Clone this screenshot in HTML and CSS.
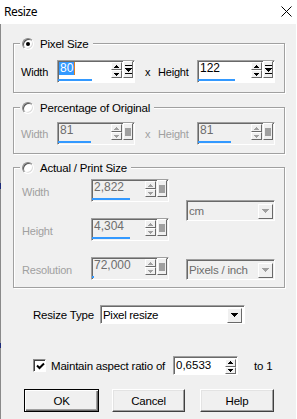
FILE: index.html
```html
<!DOCTYPE html>
<html>
<head>
<meta charset="utf-8">
<link rel="stylesheet" href="styles.css">
</head>
<body>
<div class="titlebar">
  <span class="title">Resize</span>
  <svg class="close" width="11" height="11" viewBox="0 0 11 11"><path d="M0.5 0.5L10.5 10.5M10.5 0.5L0.5 10.5" stroke="#000" stroke-width="1"/></svg>
</div>
<div class="main">
  <div class="group g1">
    <div class="legend"><span class="radio checked"></span><span>Pixel Size</span></div>
    <div class="row">
      <span class="lbl lw1">Width</span>
      <div class="spin">
        <div class="top">
          <div class="field"><span class="sel">80</span></div>
          <div class="arrows">
            <span class="ab"><svg width="5" height="3"><path d="M2 0h1v1h1v1h1v1H0V2h1V1h1z"/></svg></span>
            <span class="ab"><svg width="5" height="3"><path d="M0 0h5v1H4v1H3v1H2V2H1V1H0z"/></svg></span>
          </div>
          <span class="end"><svg width="7" height="9"><path d="M0 0h7v1H0z M0 3h7v1H6v1H5v1H4v1H3V6H2V5H1V4H0z M0 8h7v1H0z"/></svg></span>
        </div>
        <div class="bar" style="width:34px"></div>
      </div>
      <span class="times">x</span>
      <span class="lbl lw2">Height</span>
      <div class="spin">
        <div class="top">
          <div class="field"><span class="val">122</span></div>
          <div class="arrows">
            <span class="ab"><svg width="5" height="3"><path d="M2 0h1v1h1v1h1v1H0V2h1V1h1z"/></svg></span>
            <span class="ab"><svg width="5" height="3"><path d="M0 0h5v1H4v1H3v1H2V2H1V1H0z"/></svg></span>
          </div>
          <span class="end"><svg width="7" height="9"><path d="M0 0h7v1H0z M0 3h7v1H6v1H5v1H4v1H3V6H2V5H1V4H0z M0 8h7v1H0z"/></svg></span>
        </div>
        <div class="bar" style="width:37px"></div>
      </div>
    </div>
  </div>

  <div class="group g2 disabled">
    <div class="legend"><span class="radio"></span><span>Percentage of Original</span></div>
    <div class="row">
      <span class="lbl lw1">Width</span>
      <div class="spin">
        <div class="top">
          <div class="field"><span class="val">81</span></div>
          <div class="arrows">
            <span class="ab"><svg width="5" height="3"><path d="M2 0h1v1h1v1h1v1H0V2h1V1h1z"/></svg></span>
            <span class="ab"><svg width="5" height="3"><path d="M0 0h5v1H4v1H3v1H2V2H1V1H0z"/></svg></span>
          </div>
          <span class="end"><span class="sq"></span></span>
        </div>
        <div class="bar" style="width:33px"></div>
      </div>
      <span class="times">x</span>
      <span class="lbl lw2">Height</span>
      <div class="spin">
        <div class="top">
          <div class="field"><span class="val">81</span></div>
          <div class="arrows">
            <span class="ab"><svg width="5" height="3"><path d="M2 0h1v1h1v1h1v1H0V2h1V1h1z"/></svg></span>
            <span class="ab"><svg width="5" height="3"><path d="M0 0h5v1H4v1H3v1H2V2H1V1H0z"/></svg></span>
          </div>
          <span class="end"><span class="sq"></span></span>
        </div>
        <div class="bar" style="width:33px"></div>
      </div>
    </div>
  </div>

  <div class="group g3 disabled">
    <div class="legend"><span class="radio"></span><span>Actual / Print Size</span></div>
    <div class="grid">
      <span class="lbl r1">Width</span>
      <div class="spin r1">
        <div class="top">
          <div class="field"><span class="val">2,822</span></div>
          <div class="arrows">
            <span class="ab"><svg width="5" height="3"><path d="M2 0h1v1h1v1h1v1H0V2h1V1h1z"/></svg></span>
            <span class="ab"><svg width="5" height="3"><path d="M0 0h5v1H4v1H3v1H2V2H1V1H0z"/></svg></span>
          </div>
          <span class="end"><span class="sq"></span></span>
        </div>
        <div class="bar" style="width:38px"></div>
      </div>
      <div class="select dis unit">
        <span class="stext">cm</span>
        <span class="dd"><svg width="7" height="4"><path d="M0 0h7v1H6v1H5v1H4v1H3V3H2V2H1V1H0z"/></svg></span>
      </div>
      <span class="lbl r2">Height</span>
      <div class="spin r2">
        <div class="top">
          <div class="field"><span class="val">4,304</span></div>
          <div class="arrows">
            <span class="ab"><svg width="5" height="3"><path d="M2 0h1v1h1v1h1v1H0V2h1V1h1z"/></svg></span>
            <span class="ab"><svg width="5" height="3"><path d="M0 0h5v1H4v1H3v1H2V2H1V1H0z"/></svg></span>
          </div>
          <span class="end"><span class="sq"></span></span>
        </div>
        <div class="bar" style="width:38px"></div>
      </div>
      <span class="lbl r3">Resolution</span>
      <div class="spin r3">
        <div class="top">
          <div class="field"><span class="val">72,000</span></div>
          <div class="arrows">
            <span class="ab"><svg width="5" height="3"><path d="M2 0h1v1h1v1h1v1H0V2h1V1h1z"/></svg></span>
            <span class="ab"><svg width="5" height="3"><path d="M0 0h5v1H4v1H3v1H2V2H1V1H0z"/></svg></span>
          </div>
          <span class="end"><span class="sq"></span></span>
        </div>
        <div class="bar" style="width:2px"></div>
      </div>
      <div class="select dis ppi">
        <span class="stext">Pixels / inch</span>
        <span class="dd"><svg width="7" height="4"><path d="M0 0h7v1H6v1H5v1H4v1H3V3H2V2H1V1H0z"/></svg></span>
      </div>
    </div>
  </div>

  <div class="typerow">
    <span class="lbl tl">Resize Type</span>
    <div class="select rtype">
      <span class="stext">Pixel resize</span>
      <span class="dd"><svg width="7" height="4"><path d="M0 0h7v1H6v1H5v1H4v1H3V3H2V2H1V1H0z"/></svg></span>
    </div>
  </div>

  <div class="aspect">
    <span class="check"><svg width="9" height="9" viewBox="0 0 9 9"><path d="M1 3.5L3.5 6L8 1.5" fill="none" stroke="#000" stroke-width="2"/></svg></span>
    <span class="alabel">Maintain aspect ratio of</span>
    <div class="ratio">
      <span class="rval">0,6533</span>
      <div class="arrows">
        <span class="ab"><svg width="5" height="3"><path d="M2 0h1v1h1v1h1v1H0V2h1V1h1z"/></svg></span>
        <span class="ab"><svg width="5" height="3"><path d="M0 0h5v1H4v1H3v1H2V2H1V1H0z"/></svg></span>
      </div>
    </div>
    <span class="to1">to 1</span>
  </div>

  <div class="buttons">
    <button class="btn def">OK</button>
    <button class="btn cancel">Cancel</button>
    <button class="btn help">Help</button>
  </div>
</div>
</body>
</html>
```

FILE: styles.css
```css
* { box-sizing: border-box; }

body {
  margin: 0;
  width: 297px;
  height: 419px;
  overflow: hidden;
  background: #f0f0f0;
  font-family: "Liberation Sans", Arial, sans-serif;
  font-size: 11px;
  letter-spacing: -0.2px;
  color: #000;
}

.titlebar {
  height: 24px;
  background: #fff;
  display: flex;
  align-items: center;
  justify-content: space-between;
  padding: 0 5px 0 4px;
}

.title {
  font-family: "Noto Sans", sans-serif;
  font-size: 12px;
  letter-spacing: -0.4px;
  margin-top: -1px;
}

.close { display: block; margin-top: -2px; }

.main {
  height: 395px;
  padding: 19px 11px 0 12px;
  border-left: 1px solid #8a8a8a;
  border-image: linear-gradient(to bottom, #8a8a8a 0 159px, #1c2b7a 159px 165px, #8a8a8a 165px 318px, #1c2b7a 318px 323px, #8a8a8a 323px) 1;
  border-right: 0;
  box-shadow: inset -1px 0 0 #fff;
}

/* group boxes */
.group {
  width: 272px;
  border: 1px solid #a0a0a0;
  box-shadow: 1px 1px 0 #fff, inset 1px 1px 0 #fff;
  display: flex;
  flex-direction: column;
  padding-left: 7px;
}

.g1 { padding-bottom: 9px; }
.g2 { margin-top: 14px; padding-bottom: 8px; }
.g3 { margin-top: 13px; padding-bottom: 7px; padding-left: 8px; }

.legend {
  align-self: flex-start;
  display: flex;
  align-items: center;
  gap: 6px;
  height: 13px;
  margin: -7px 0 0 -1px;
  padding: 0 4px 0 2px;
  background: #f0f0f0;
  color: #000;
  font-size: 11.5px;
}

.g3 .legend { margin-left: -2px; }

.radio {
  width: 12px;
  height: 12px;
  border-radius: 50%;
  background: #fff;
  border: 1px solid;
  border-color: #8a8a8a #fff #fff #8a8a8a;
  box-shadow: inset 1px 1px 0 #555, inset -1px -1px 0 #dcdcdc;
  display: flex;
  align-items: center;
  justify-content: center;
}

.radio.checked::after {
  content: "";
  width: 4px;
  height: 4px;
  border-radius: 50%;
  background: #000;
}

.row {
  display: flex;
  align-items: center;
}

.g1 .row { margin-top: 10px; }
.g2 .row { margin-top: 8px; }

.lbl { white-space: nowrap; }
.lw1 { width: 36px; }
.lw2 { width: 39px; }
.times { width: 23px; padding-left: 10px; }

.disabled .lbl, .disabled .times { color: #a0a0a0; }

/* spin edit */
.spin {
  width: 78px;
  height: 23px;
  background: #fff;
  border: 1px solid;
  border-color: #a0a0a0 #fff #fff #a0a0a0;
  box-shadow: inset 1px 1px 0 #696969;
  display: flex;
  flex-direction: column;
}

.disabled .spin { background: #f0f0f0; }

.spin .top {
  display: flex;
  height: 18px;
}

.field {
  flex: 1;
  padding: 1px 0 0 1px;
  font-size: 12px;
  line-height: 13px;
  letter-spacing: 0;
}

.sel {
  background: #3399ff;
  color: #fff;
  padding: 0 1px;
  display: inline-block;
  border-right: 1px solid #e08020;
}

.val { padding-left: 1px; }
.disabled .val { color: #6d6d6d; }

.arrows {
  width: 11px;
  display: flex;
  flex-direction: column;
  margin-top: 1px;
}

.ab {
  height: 8px;
  background: #f0f0f0;
  border: 1px solid;
  border-color: #fff #696969 #696969 #fff;
  display: flex;
  align-items: center;
  justify-content: center;
}

.ab svg, .end svg, .dd svg { display: block; fill: #000; }
.disabled .ab svg { fill: #a0a0a0; }

.end {
  width: 10px;
  height: 17px;
  margin: 0 1px 0 1px;
  background: #f0f0f0;
  border: 1px solid;
  border-color: #fff #696969 #696969 #fff;
  display: flex;
  align-items: center;
  justify-content: center;
}

.sq {
  width: 6px;
  height: 8px;
  background: #a0a0a0;
}

.bar {
  height: 2px;
  background: #3399ff;
  margin-top: 0;
}

/* actual size grid */
.grid {
  margin-top: 5px;
  display: grid;
  grid-template-columns: 52px 78px 89px;
  grid-template-rows: 23px 23px 23px;
  column-gap: 17px;
  row-gap: 16px;
  align-items: center;
}

.grid .lbl { padding-top: 2px; }
.r1 { grid-row: 1; }
.r2 { grid-row: 2; }
.r3 { grid-row: 3; }
.unit { grid-column: 3; grid-row: 1 / 3; align-self: center; height: 21px; margin-top: 1px; }
.ppi { grid-column: 3; grid-row: 3; align-self: end; height: 21px; }

/* selects */
.select {
  display: flex;
  align-items: center;
  justify-content: space-between;
  background: #fff;
  border: 1px solid;
  border-color: #a0a0a0 #fff #fff #a0a0a0;
  box-shadow: inset 1px 1px 0 #696969;
  padding: 1px 1px 0 2px;
}

.select.dis { background: #f0f0f0; color: #6d6d6d; }

.stext { font-size: 11.5px; letter-spacing: -0.2px; white-space: nowrap; }

.dd {
  width: 15px;
  height: 15px;
  flex: none;
  background: #f0f0f0;
  border: 1px solid;
  border-color: #fff #696969 #696969 #fff;
  display: flex;
  align-items: center;
  justify-content: center;
}

.dis .dd svg { fill: #a0a0a0; }

.typerow {
  display: flex;
  align-items: center;
  margin-top: 17px;
  padding-left: 20px;
}

.tl { width: 67px; font-size: 11.5px; }

.rtype {
  width: 145px;
  height: 19px;
  padding-right: 2px;
}

.rtype .stext { letter-spacing: -0.3px; }

/* aspect */
.aspect {
  display: flex;
  align-items: center;
  margin-top: 32px;
  padding-left: 20px;
  height: 19px;
}

.check {
  width: 13px;
  height: 13px;
  background: #fff;
  border: 1px solid;
  border-color: #8a8a8a #fff #fff #8a8a8a;
  box-shadow: inset 1px 1px 0 #404040;
  display: flex;
  align-items: center;
  justify-content: center;
  padding: 1px 0 0 1px;
}

.check svg { display: block; }

.alabel { margin-left: 5px; width: 122px; font-size: 11.5px; }

.ratio {
  width: 65px;
  height: 19px;
  display: flex;
  background: #fff;
  border: 1px solid;
  border-color: #a0a0a0 #fff #fff #a0a0a0;
  box-shadow: inset 1px 1px 0 #696969;
  padding: 1px 1px 0 2px;
}

.rval { flex: 1; font-size: 11.5px; line-height: 15px; letter-spacing: 0; }

.ratio .arrows { margin-top: 1px; }
.ratio .ab { height: 8px; }

.to1 { margin-left: 16px; font-size: 11.5px; }

/* buttons */
.buttons {
  display: flex;
  margin-top: 14px;
  padding-left: 11px;
}

.btn {
  height: 23px;
  font-family: "Liberation Sans", Arial, sans-serif;
  font-size: 11.5px;
  letter-spacing: -0.2px;
  color: #000;
  background: #f0f0f0;
  border: 1px solid;
  border-color: #fff #404040 #404040 #fff;
  box-shadow: inset -1px -1px 0 #a0a0a0, inset 1px 1px 0 #e3e3e3;
  padding: 0;
}

.def { width: 75px; outline: 1px solid #000; outline-offset: -1px; border-color: #000; box-shadow: inset 1px 1px 0 #fff, inset -1px -1px 0 #696969, inset -2px -2px 0 #a0a0a0; }
.cancel { width: 73px; margin-left: 13px; }
.help { width: 74px; margin-left: 15px; }
```
